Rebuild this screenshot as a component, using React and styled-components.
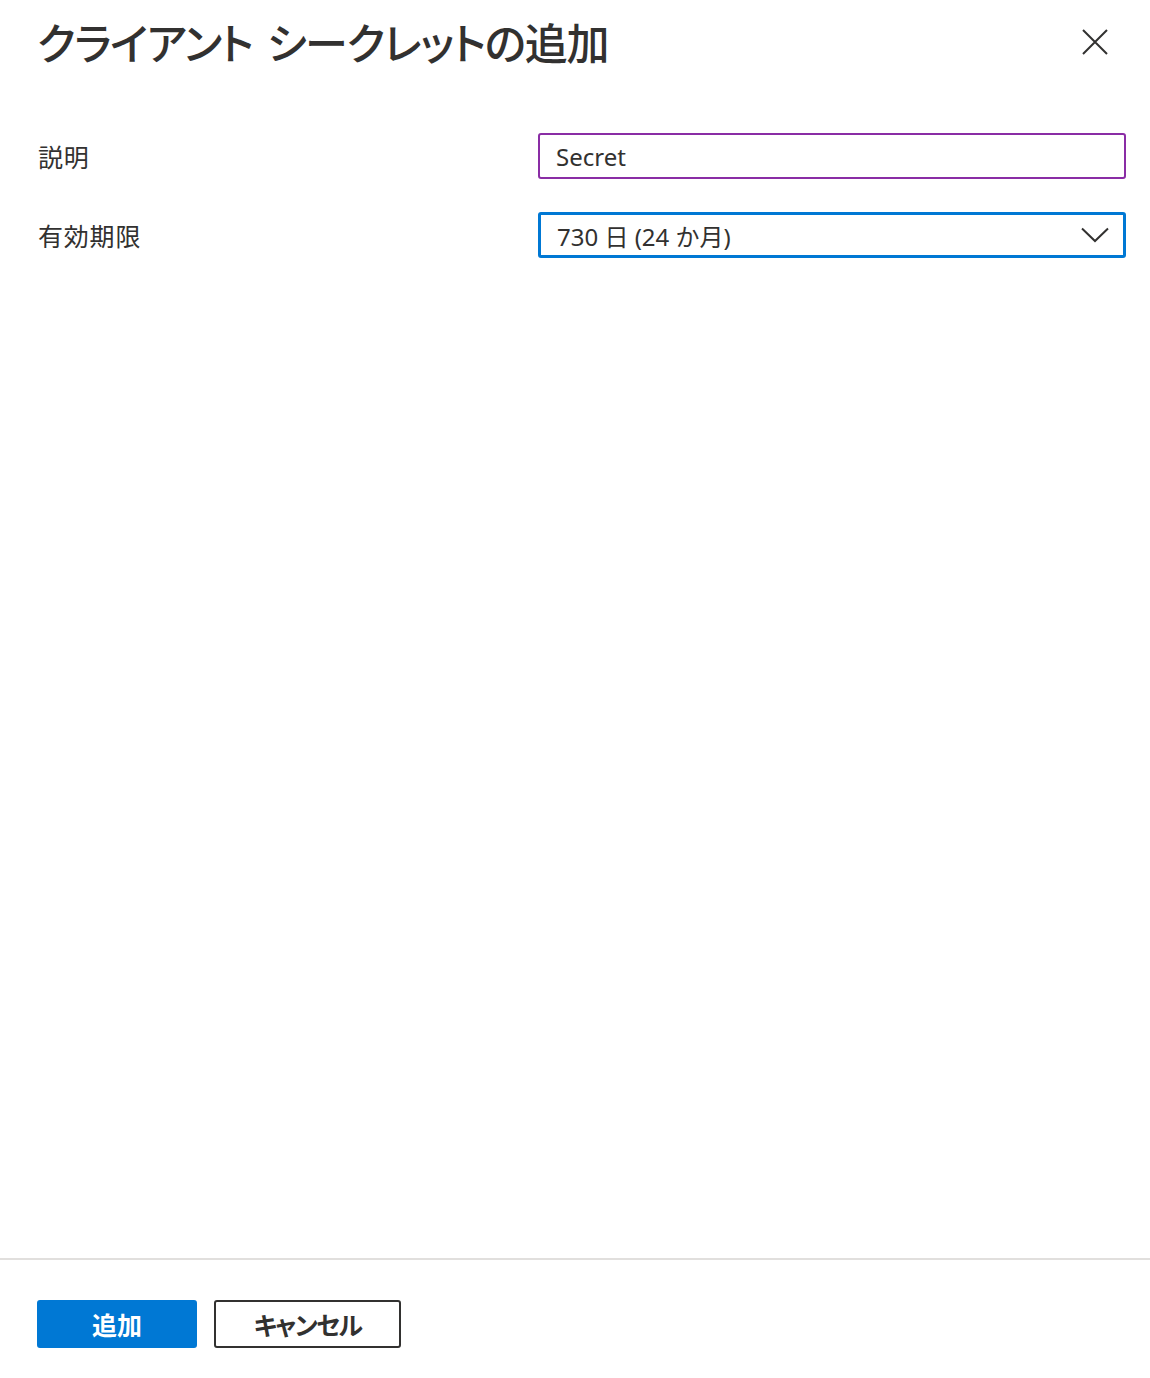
import React from 'react';
import styled, { createGlobalStyle } from 'styled-components';

const GlobalStyle = createGlobalStyle`
  html, body {
    margin: 0;
    padding: 0;
    background: #fff;
  }
  body {
    font-family: "Noto Sans", "Noto Sans CJK JP", sans-serif;
    color: #323130;
  }
`;

const Panel = styled.div`
  display: flex;
  flex-direction: column;
  height: 1378px;
  box-sizing: border-box;
`;

const Header = styled.div`
  display: flex;
  align-items: center;
  justify-content: space-between;
  height: 82px;
  padding: 0 42px 0 37px;
`;

const Title = styled.h1`
  margin: 0;
  font-family: "Noto Sans CJK JP", sans-serif;
  font-size: 43px;
  font-weight: 500;
  font-feature-settings: "palt";
  letter-spacing: -1.3px;
  word-spacing: 6px;
  color: #323130;
  line-height: 1;
`;

const CloseButton = styled.button`
  border: none;
  background: none;
  padding: 0;
  width: 26px;
  height: 26px;
  display: flex;
  align-items: center;
  justify-content: center;
  cursor: pointer;
  margin-top: 2px;
`;

const Form = styled.div`
  display: flex;
  flex-direction: column;
  gap: 33px;
  padding: 51px 24px 0 38px;
  flex: 1;
`;

const Row = styled.div`
  display: grid;
  grid-template-columns: 500px 1fr;
  align-items: center;
`;

const Label = styled.label`
  font-size: 25px;
  letter-spacing: 0.8px;
  font-family: "Noto Sans CJK JP", sans-serif;
  color: #323130;
`;

const Field = styled.div`
  display: flex;
  align-items: center;
  justify-content: space-between;
  height: 46px;
  box-sizing: border-box;
  border: ${p => (p.focused ? '3px solid #0078d4' : '2px solid #8a2da5')};
  border-radius: 3px;
  padding: 0 ${p => (p.focused ? '14px' : '15px')} 0 16px;
  font-size: 24px;
  color: #323130;
`;

const Footer = styled.div`
  border-top: 2px solid #e1dfdd;
  padding: 40px 37px 30px;
  display: flex;
  gap: 17px;
`;

const Button = styled.button`
  height: 48px;
  box-sizing: border-box;
  border-radius: 3px;
  font-family: "Noto Sans CJK JP", sans-serif;
  font-size: 25px;
  font-weight: 700;
  font-feature-settings: "palt";
  letter-spacing: ${p => (p.primary ? '0' : '-1.5px')};
  cursor: pointer;
  background: ${p => (p.primary ? '#0078d4' : '#fff')};
  color: ${p => (p.primary ? '#fff' : '#323130')};
  border: ${p => (p.primary ? '2px solid #0078d4' : '2px solid #323130')};
  width: ${p => (p.primary ? '160px' : '187px')};
  padding: 0;
`;

const App = () => (
  <>
    <GlobalStyle />
    <Panel>
      <Header>
        <Title>クライアント シークレットの追加</Title>
        <CloseButton aria-label="閉じる">
          <svg width="26" height="26" viewBox="0 0 26 26">
            <path d="M1 1 L25 25 M25 1 L1 25" stroke="#323130" strokeWidth="2" fill="none" />
          </svg>
        </CloseButton>
      </Header>
      <Form>
        <Row>
          <Label>説明</Label>
          <Field>Secret</Field>
        </Row>
        <Row>
          <Label>有効期限</Label>
          <Field focused>
            <span>730 日 (24 か月)</span>
            <svg width="28" height="16" viewBox="0 0 28 16">
              <path d="M1 1.5 L14 14 L27 1.5" stroke="#323130" strokeWidth="2" fill="none" />
            </svg>
          </Field>
        </Row>
      </Form>
      <Footer>
        <Button primary>追加</Button>
        <Button>キャンセル</Button>
      </Footer>
    </Panel>
  </>
);

export default App;
